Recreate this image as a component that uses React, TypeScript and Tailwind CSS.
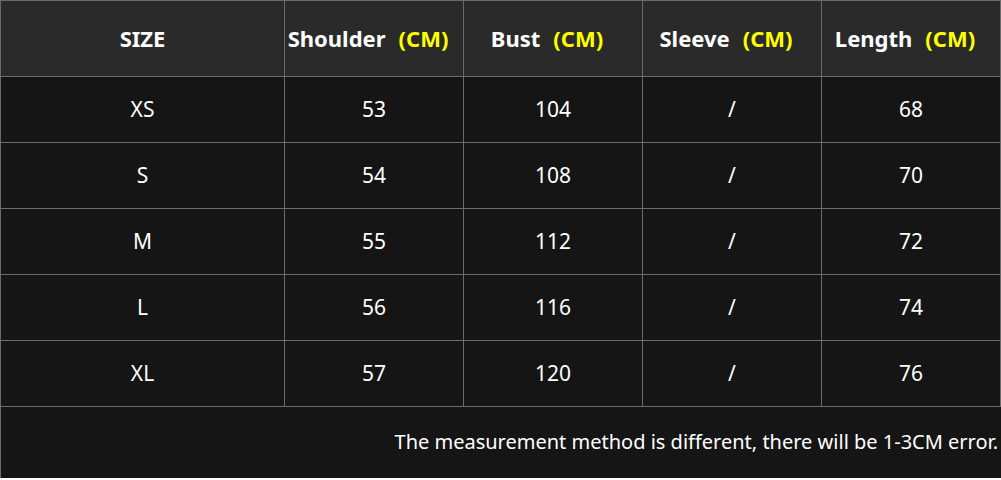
const headers = ["Shoulder", "Bust", "Sleeve", "Length"];

const rows = [
  ["XS", "53", "104", "/", "68"],
  ["S", "54", "108", "/", "70"],
  ["M", "55", "112", "/", "72"],
  ["L", "56", "116", "/", "74"],
  ["XL", "57", "120", "/", "76"],
];

const App = () => {
  return (
    <div
      className="w-[1001px] h-[480px] bg-white text-white"
      style={{ fontFamily: '"Noto Sans", "Open Sans", sans-serif' }}
    >
      <div className="border-l border-t border-[#6b6b6b]">
        {/* header */}
        <div className="grid grid-cols-[284px_179px_179px_179px_179px] h-[76px] bg-[#2a2a2a]">
          <div className="flex items-center justify-center border-r border-b border-[#6b6b6b] text-[22px] font-bold">
            SIZE
          </div>
          {headers.map((h) => (
            <div
              key={h}
              className="flex items-center justify-center pr-[12px] border-r border-b border-[#6b6b6b] text-[22px] font-bold whitespace-nowrap"
            >
              {h}
              <span className="ml-[13px] text-[#ffff00]">(CM)</span>
            </div>
          ))}
        </div>

        {/* body */}
        {rows.map((r) => (
          <div
            key={r[0]}
            className="grid grid-cols-[284px_179px_179px_179px_179px] h-[66px] bg-[#151515]"
          >
            {r.map((c, i) => (
              <div
                key={i}
                className="flex items-center justify-center border-r border-b border-[#6b6b6b] text-[21px]"
              >
                {c}
              </div>
            ))}
          </div>
        ))}

        {/* footer note */}
        <div className="h-[71px] bg-[#151515] flex items-center justify-end pr-[3px] pb-[2px] text-[20px]">
          The measurement method is different, there will be 1-3CM error.
        </div>
      </div>
    </div>
  );
};

export default App;
